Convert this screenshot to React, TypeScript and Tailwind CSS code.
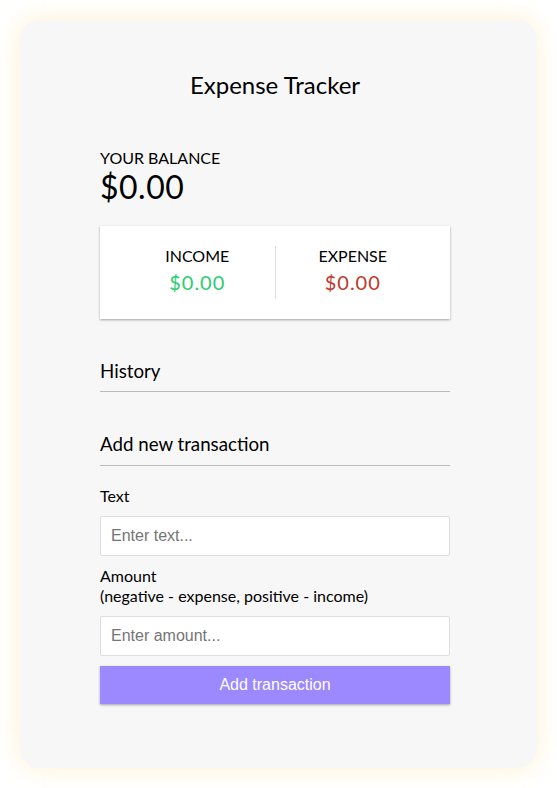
export default function App() {
  return (
    <div className="min-h-screen bg-white p-5 font-['Lato','Noto_Sans',sans-serif] text-black">
      <div className="rounded-[20px] bg-[#f7f7f7] pl-[80px] pr-[87px] pt-[50px] pb-[64px] shadow-[0_0_24px_rgba(255,205,80,0.28)]">
        <div className="w-[350px]">
          {/* Header */}
          <h2 className="text-center text-[24px] leading-[29px]">Expense Tracker</h2>

          {/* Balance */}
          <h4 className="mt-[49px] text-[16px] leading-[19px] uppercase">Your Balance</h4>
          <h1 className="text-[32px] leading-[39px] tracking-[0.5px]">$0.00</h1>

          {/* Income / Expense */}
          <div className="mt-5 flex bg-white p-5 shadow-[0_1px_3px_rgba(0,0,0,0.12),0_1px_2px_rgba(0,0,0,0.24)]">
            <div className="flex-1 border-r border-[#dedede] text-center">
              <h4 className="text-[16px] leading-[19px] uppercase">Income</h4>
              <p className="my-[5px] text-[20px] leading-[24px] tracking-[1px] text-[#2ecc71]">$0.00</p>
            </div>
            <div className="flex-1 text-center">
              <h4 className="text-[16px] leading-[19px] uppercase">Expense</h4>
              <p className="my-[5px] text-[20px] leading-[24px] tracking-[1px] text-[#c0392b]">$0.00</p>
            </div>
          </div>

          {/* History */}
          <h3 className="mt-[41px] border-b border-[#bbb] pb-[8px] text-[18.72px] leading-[22.5px]">History</h3>
          <ul className="mb-[41px]" />

          {/* Form */}
          <h3 className="border-b border-[#bbb] pb-[10px] text-[18.72px] leading-[22.5px]">Add new transaction</h3>
          <form className="mt-[10px]" onSubmit={(e) => e.preventDefault()}>
            <div>
              <label className="mt-[10px] mb-[11px] inline-block text-[16px] leading-[19px]">Text</label>
              <input
                type="text"
                placeholder="Enter text..."
                className="block w-full rounded-[2px] border border-[#dedede] bg-white p-[10px] font-['Liberation_Sans',Arial,sans-serif] text-[16px] leading-[18px] placeholder:text-[#757575] focus:outline-none"
              />
            </div>
            <div>
              <label className="mt-[10px] mb-[11px] inline-block text-[16px] leading-[19.5px]">
                Amount <br />
                (negative - expense, positive - income)
              </label>
              <input
                type="number"
                placeholder="Enter amount..."
                className="block w-full rounded-[2px] border border-[#dedede] bg-white p-[10px] font-['Liberation_Sans',Arial,sans-serif] text-[16px] leading-[18px] placeholder:text-[#757575] focus:outline-none"
              />
            </div>
            <button className="mt-[10px] block w-full bg-[#9c88ff] p-[10px] font-['Liberation_Sans',Arial,sans-serif] text-[16px] leading-[18px] text-white shadow-[0_1px_3px_rgba(0,0,0,0.12),0_1px_2px_rgba(0,0,0,0.24)]">
              Add transaction
            </button>
          </form>
        </div>
      </div>
    </div>
  )
}
